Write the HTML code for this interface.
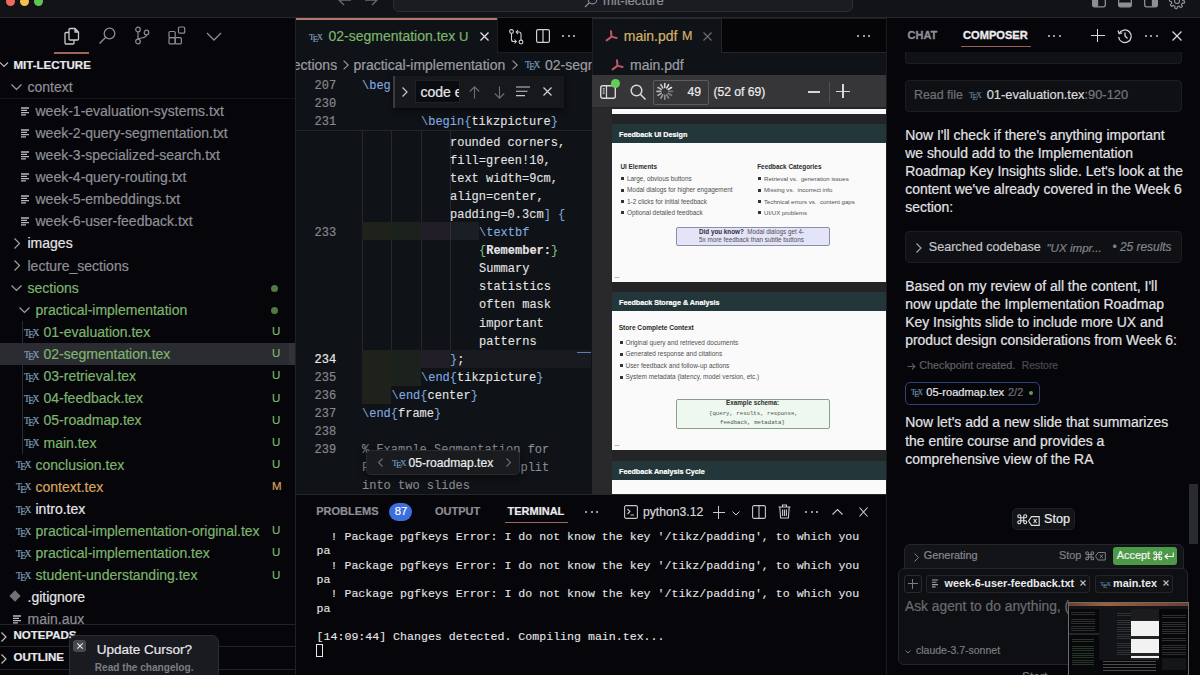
<!DOCTYPE html>
<html><head><meta charset="utf-8">
<style>
*{box-sizing:border-box;margin:0;padding:0}
html,body{width:1200px;height:675px;overflow:hidden;background:#07070a;font-family:"Liberation Sans",sans-serif;color:#ccc}
.a{position:absolute}
.t{position:absolute;white-space:pre;line-height:1;-webkit-text-stroke:0.2px currentColor}
.m{-webkit-text-stroke:0.1px currentColor}
svg{overflow:visible}
</style></head>
<body>
<div class="a" style="left:0px;top:0px;width:1200px;height:17px;background:#121317;"></div>
<div class="a" style="left:0px;top:17px;width:1200px;height:1px;background:#26272c;"></div>
<div class="a" style="left:5.800000000000001px;top:-3.45px;width:9.2px;height:9.2px;border-radius:5px;background:#ee6a5f"></div>
<div class="a" style="left:19.799999999999997px;top:-3.45px;width:9.2px;height:9.2px;border-radius:5px;background:#f5be4f"></div>
<div class="a" style="left:33.9px;top:-3.45px;width:9.2px;height:9.2px;border-radius:5px;background:#5fc454"></div>
<svg class="a" style="left:338px;top:-6px;" width="14" height="14" viewBox="0 0 14 14"><path d="M6 1 L1 6 L6 11 M1 6 H13" stroke="#6b6c70" stroke-width="1.3" fill="none"/></svg>
<svg class="a" style="left:364px;top:-6px;" width="14" height="14" viewBox="0 0 14 14"><path d="M8 1 L13 6 L8 11 M13 6 H1" stroke="#6b6c70" stroke-width="1.3" fill="none"/></svg>
<div class="a" style="left:393px;top:-7px;width:460px;height:19px;border:1px solid #2c2d32;border-radius:6px;background:#1b1c21"></div>
<svg class="a" style="left:584px;top:-5px;" width="14" height="14" viewBox="0 0 14 14"><circle cx="8.5" cy="4.5" r="4.3" stroke="#8a8b90" stroke-width="1.2" fill="none"/><path d="M5.5 7.5 L1 12" stroke="#8a8b90" stroke-width="1.3"/></svg>
<div class="t" style="left:603.00px;top:-6.20px;font-size:13px;color:#8f9095;font-family:'Liberation Sans',sans-serif;">mit-lecture</div>
<svg class="a" style="left:1091.5px;top:-7px;" width="14" height="14.5" viewBox="0 0 14 14.5"><rect x="0.65" y="0.65" width="12.7" height="13.2" rx="2" stroke="#8e8f94" stroke-width="1.3" fill="none"/><rect x="0.65" y="0.65" width="5.5" height="13.2" rx="1.5" fill="#8e8f94"/></svg>
<svg class="a" style="left:1117.5px;top:-7px;" width="14" height="14.5" viewBox="0 0 14 14.5"><rect x="0.65" y="0.65" width="12.7" height="13.2" rx="2" stroke="#8e8f94" stroke-width="1.3" fill="none"/><rect x="0.65" y="9.5" width="12.7" height="4.35" rx="1.5" fill="#8e8f94"/></svg>
<svg class="a" style="left:1144px;top:-7px;" width="14" height="14.5" viewBox="0 0 14 14.5"><rect x="0.65" y="0.65" width="12.7" height="13.2" rx="2" stroke="#8e8f94" stroke-width="1.3" fill="none"/><rect x="7.85" y="0.65" width="5.5" height="13.2" rx="1.5" fill="#8e8f94"/></svg>
<svg class="a" style="left:1169px;top:-7.5px;" width="16" height="16" viewBox="0 0 16 16"><polygon points="15.60,8.00 15.56,8.74 15.45,9.48 15.27,10.21 13.17,10.14 12.94,10.64 12.66,11.11 12.33,11.55 13.37,13.37 12.82,13.87 12.22,14.32 11.58,14.70 10.14,13.17 9.63,13.36 9.09,13.49 8.55,13.57 8.00,15.60 7.26,15.56 6.52,15.45 5.79,15.27 5.86,13.17 5.36,12.94 4.89,12.66 4.45,12.33 2.63,13.37 2.13,12.82 1.68,12.22 1.30,11.58 2.83,10.14 2.64,9.63 2.51,9.09 2.43,8.55 0.40,8.00 0.44,7.26 0.55,6.52 0.73,5.79 2.83,5.86 3.06,5.36 3.34,4.89 3.67,4.45 2.63,2.63 3.18,2.13 3.78,1.68 4.42,1.30 5.86,2.83 6.37,2.64 6.91,2.51 7.45,2.43 8.00,0.40 8.74,0.44 9.48,0.55 10.21,0.73 10.14,2.83 10.64,3.06 11.11,3.34 11.55,3.67 13.37,2.63 13.87,3.18 14.32,3.78 14.70,4.42 13.17,5.86 13.36,6.37 13.49,6.91 13.57,7.45" stroke="#8e8f94" stroke-width="1.2" fill="none" stroke-linejoin="round"/><circle cx="8" cy="8" r="2.5" stroke="#8e8f94" stroke-width="1.2" fill="none"/></svg>
<div class="a" style="left:0px;top:18px;width:295px;height:657px;background:#05050a;"></div>
<svg class="a" style="left:63px;top:27px;" width="17" height="18" viewBox="0 0 17 18"><path d="M7 1.5 H12 L15.5 5 V12 Q15.5 13 14.5 13 H7 Q6 13 6 12 V2.5 Q6 1.5 7 1.5 Z M12 1.5 V5 H15.5" stroke="#c9c9cc" stroke-width="1.3" fill="none"/><path d="M6 5.5 H3 Q2 5.5 2 6.5 V16 Q2 17 3 17 H10 Q11 17 11 16 V13" stroke="#c9c9cc" stroke-width="1.3" fill="none"/></svg>
<svg class="a" style="left:98px;top:27px;" width="18" height="18" viewBox="0 0 18 18"><circle cx="11.5" cy="6.5" r="5.3" stroke="#8d8e92" stroke-width="1.3" fill="none"/><path d="M7.8 10.2 L1.5 16.5" stroke="#8d8e92" stroke-width="1.4"/></svg>
<svg class="a" style="left:134px;top:26px;" width="16" height="19" viewBox="0 0 16 19"><circle cx="4" cy="3.5" r="2.3" stroke="#8d8e92" stroke-width="1.2" fill="none"/><circle cx="4" cy="15.5" r="2.3" stroke="#8d8e92" stroke-width="1.2" fill="none"/><circle cx="12.5" cy="6.5" r="2.3" stroke="#8d8e92" stroke-width="1.2" fill="none"/><path d="M4 5.8 V13.2 M12.5 8.8 Q12.5 12 4.5 12.5" stroke="#8d8e92" stroke-width="1.2" fill="none"/></svg>
<svg class="a" style="left:168px;top:26px;" width="19" height="19" viewBox="0 0 19 19"><rect x="1" y="5.5" width="6.2" height="6.2" rx="1.2" stroke="#8d8e92" stroke-width="1.2" fill="none"/><rect x="1" y="11.7" width="6.2" height="6.2" rx="1.2" stroke="#8d8e92" stroke-width="1.2" fill="none"/><rect x="7.2" y="11.7" width="6.2" height="6.2" rx="1.2" stroke="#8d8e92" stroke-width="1.2" fill="none"/><rect x="10.5" y="1" width="6.2" height="6.2" rx="1.2" stroke="#8d8e92" stroke-width="1.2" fill="none"/></svg>
<svg class="a" style="left:206px;top:32px;" width="16" height="9" viewBox="0 0 16 9"><path d="M1 1 L8 8 L15 1" stroke="#8d8e92" stroke-width="1.3" fill="none"/></svg>
<div class="a" style="left:54px;top:52.3px;width:35px;height:1.4px;background:#9e665a;"></div>
<svg class="a" style="left:0px;top:62px;" width="8" height="6" viewBox="0 0 8 6"><path d="M0 0.5 L4 4.5 L8 0.5" stroke="#bbb" stroke-width="1.1" fill="none"/></svg>
<div class="t" style="left:13.50px;top:59.77px;font-size:11.5px;color:#e8e8ea;font-family:'Liberation Sans',sans-serif;font-weight:bold;-webkit-text-stroke:0.2px #e8e8ea">MIT-LECTURE</div>
<div class="a" style="left:0px;top:343px;width:296px;height:22px;background:#2b2c32;"></div>
<div class="a" style="left:289px;top:343px;width:7px;height:22px;background:#323338;"></div>
<div class="a" style="left:22px;top:321px;width:1px;height:133px;background:#2a2b30;"></div>
<div class="a" style="left:0px;top:98px;width:295px;height:1px;background:#141519;"></div>
<svg class="a" style="left:11px;top:83.56px;" width="11" height="7" viewBox="0 0 11 7"><path d="M0.5 0.5 L5.5 5.5 L10.5 0.5" stroke="#a0a1a5" stroke-width="1.2" fill="none"/></svg>
<div class="t" style="left:27.50px;top:79.71px;font-size:14px;color:#8f9095;font-family:'Liberation Sans',sans-serif;">context</div>
<svg class="a" style="left:21px;top:106.56px;" width="9" height="9" viewBox="0 0 9 9"><path d="M0 1 H8 M0 3.3 H6 M0 5.6 H8 M0 7.9 H5" stroke="#b9babd" stroke-width="1.3"/></svg>
<div class="t" style="left:35.50px;top:103.71px;font-size:14px;color:#8f9095;font-family:'Liberation Sans',sans-serif;">week-1-evaluation-systems.txt</div>
<svg class="a" style="left:21px;top:128.68px;" width="9" height="9" viewBox="0 0 9 9"><path d="M0 1 H8 M0 3.3 H6 M0 5.6 H8 M0 7.9 H5" stroke="#b9babd" stroke-width="1.3"/></svg>
<div class="t" style="left:35.50px;top:125.83px;font-size:14px;color:#8f9095;font-family:'Liberation Sans',sans-serif;">week-2-query-segmentation.txt</div>
<svg class="a" style="left:21px;top:150.8px;" width="9" height="9" viewBox="0 0 9 9"><path d="M0 1 H8 M0 3.3 H6 M0 5.6 H8 M0 7.9 H5" stroke="#b9babd" stroke-width="1.3"/></svg>
<div class="t" style="left:35.50px;top:147.95px;font-size:14px;color:#8f9095;font-family:'Liberation Sans',sans-serif;">week-3-specialized-search.txt</div>
<svg class="a" style="left:21px;top:172.92000000000002px;" width="9" height="9" viewBox="0 0 9 9"><path d="M0 1 H8 M0 3.3 H6 M0 5.6 H8 M0 7.9 H5" stroke="#b9babd" stroke-width="1.3"/></svg>
<div class="t" style="left:35.50px;top:170.07px;font-size:14px;color:#8f9095;font-family:'Liberation Sans',sans-serif;">week-4-query-routing.txt</div>
<svg class="a" style="left:21px;top:195.04000000000002px;" width="9" height="9" viewBox="0 0 9 9"><path d="M0 1 H8 M0 3.3 H6 M0 5.6 H8 M0 7.9 H5" stroke="#b9babd" stroke-width="1.3"/></svg>
<div class="t" style="left:35.50px;top:192.19px;font-size:14px;color:#8f9095;font-family:'Liberation Sans',sans-serif;">week-5-embeddings.txt</div>
<svg class="a" style="left:21px;top:217.16000000000003px;" width="9" height="9" viewBox="0 0 9 9"><path d="M0 1 H8 M0 3.3 H6 M0 5.6 H8 M0 7.9 H5" stroke="#b9babd" stroke-width="1.3"/></svg>
<div class="t" style="left:35.50px;top:214.31px;font-size:14px;color:#8f9095;font-family:'Liberation Sans',sans-serif;">week-6-user-feedback.txt</div>
<svg class="a" style="left:14px;top:238.28px;" width="7" height="11" viewBox="0 0 7 11"><path d="M0.5 0.5 L5.5 5.5 L0.5 10.5" stroke="#a0a1a5" stroke-width="1.2" fill="none"/></svg>
<div class="t" style="left:27.50px;top:236.43px;font-size:14px;color:#e4e4e6;font-family:'Liberation Sans',sans-serif;">images</div>
<svg class="a" style="left:14px;top:260.4px;" width="7" height="11" viewBox="0 0 7 11"><path d="M0.5 0.5 L5.5 5.5 L0.5 10.5" stroke="#a0a1a5" stroke-width="1.2" fill="none"/></svg>
<div class="t" style="left:27.50px;top:258.55px;font-size:14px;color:#8f9095;font-family:'Liberation Sans',sans-serif;">lecture_sections</div>
<svg class="a" style="left:11px;top:284.52px;" width="11" height="7" viewBox="0 0 11 7"><path d="M0.5 0.5 L5.5 5.5 L10.5 0.5" stroke="#a0a1a5" stroke-width="1.2" fill="none"/></svg>
<div class="t" style="left:27.50px;top:280.67px;font-size:14px;color:#7db46c;font-family:'Liberation Sans',sans-serif;">sections</div>
<div class="a" style="left:271px;top:285.0px;width:7px;height:7px;border-radius:4px;background:#4f7a44"></div>
<svg class="a" style="left:19px;top:306.64px;" width="11" height="7" viewBox="0 0 11 7"><path d="M0.5 0.5 L5.5 5.5 L10.5 0.5" stroke="#a0a1a5" stroke-width="1.2" fill="none"/></svg>
<div class="t" style="left:35.50px;top:302.79px;font-size:14px;color:#7db46c;font-family:'Liberation Sans',sans-serif;">practical-implementation</div>
<div class="a" style="left:271px;top:307.1px;width:7px;height:7px;border-radius:4px;background:#4f7a44"></div>
<div class="t" style="left:24.0px;top:328.6px;font-family:'Liberation Serif',serif;font-size:9.5px;color:#7d9cb5;letter-spacing:-0.5px">T<span style="position:relative;top:2.2px;margin-left:-1.2px">E</span><span style="margin-left:-1.0px">X</span></div>
<div class="t" style="left:43.50px;top:324.91px;font-size:14px;color:#7db46c;font-family:'Liberation Sans',sans-serif;">01-evaluation.tex</div>
<div class="t" style="left:272.00px;top:326.23px;font-size:11.5px;color:#7db46c;font-family:'Liberation Sans',sans-serif;">U</div>
<div class="t" style="left:24.0px;top:350.7px;font-family:'Liberation Serif',serif;font-size:9.5px;color:#7d9cb5;letter-spacing:-0.5px">T<span style="position:relative;top:2.2px;margin-left:-1.2px">E</span><span style="margin-left:-1.0px">X</span></div>
<div class="t" style="left:43.50px;top:347.03px;font-size:14px;color:#7db46c;font-family:'Liberation Sans',sans-serif;">02-segmentation.tex</div>
<div class="t" style="left:272.00px;top:348.35px;font-size:11.5px;color:#7db46c;font-family:'Liberation Sans',sans-serif;">U</div>
<div class="t" style="left:24.0px;top:372.8px;font-family:'Liberation Serif',serif;font-size:9.5px;color:#7d9cb5;letter-spacing:-0.5px">T<span style="position:relative;top:2.2px;margin-left:-1.2px">E</span><span style="margin-left:-1.0px">X</span></div>
<div class="t" style="left:43.50px;top:369.15px;font-size:14px;color:#7db46c;font-family:'Liberation Sans',sans-serif;">03-retrieval.tex</div>
<div class="t" style="left:272.00px;top:370.47px;font-size:11.5px;color:#7db46c;font-family:'Liberation Sans',sans-serif;">U</div>
<div class="t" style="left:24.0px;top:394.9px;font-family:'Liberation Serif',serif;font-size:9.5px;color:#7d9cb5;letter-spacing:-0.5px">T<span style="position:relative;top:2.2px;margin-left:-1.2px">E</span><span style="margin-left:-1.0px">X</span></div>
<div class="t" style="left:43.50px;top:391.27px;font-size:14px;color:#7db46c;font-family:'Liberation Sans',sans-serif;">04-feedback.tex</div>
<div class="t" style="left:272.00px;top:392.59px;font-size:11.5px;color:#7db46c;font-family:'Liberation Sans',sans-serif;">U</div>
<div class="t" style="left:24.0px;top:417.0px;font-family:'Liberation Serif',serif;font-size:9.5px;color:#7d9cb5;letter-spacing:-0.5px">T<span style="position:relative;top:2.2px;margin-left:-1.2px">E</span><span style="margin-left:-1.0px">X</span></div>
<div class="t" style="left:43.50px;top:413.39px;font-size:14px;color:#7db46c;font-family:'Liberation Sans',sans-serif;">05-roadmap.tex</div>
<div class="t" style="left:272.00px;top:414.71px;font-size:11.5px;color:#7db46c;font-family:'Liberation Sans',sans-serif;">U</div>
<div class="t" style="left:24.0px;top:439.2px;font-family:'Liberation Serif',serif;font-size:9.5px;color:#7d9cb5;letter-spacing:-0.5px">T<span style="position:relative;top:2.2px;margin-left:-1.2px">E</span><span style="margin-left:-1.0px">X</span></div>
<div class="t" style="left:43.50px;top:435.51px;font-size:14px;color:#7db46c;font-family:'Liberation Sans',sans-serif;">main.tex</div>
<div class="t" style="left:272.00px;top:436.83px;font-size:11.5px;color:#7db46c;font-family:'Liberation Sans',sans-serif;">U</div>
<div class="t" style="left:16.0px;top:461.3px;font-family:'Liberation Serif',serif;font-size:9.5px;color:#7d9cb5;letter-spacing:-0.5px">T<span style="position:relative;top:2.2px;margin-left:-1.2px">E</span><span style="margin-left:-1.0px">X</span></div>
<div class="t" style="left:35.50px;top:457.63px;font-size:14px;color:#7db46c;font-family:'Liberation Sans',sans-serif;">conclusion.tex</div>
<div class="t" style="left:272.00px;top:458.95px;font-size:11.5px;color:#7db46c;font-family:'Liberation Sans',sans-serif;">U</div>
<div class="t" style="left:16.0px;top:483.4px;font-family:'Liberation Serif',serif;font-size:9.5px;color:#7d9cb5;letter-spacing:-0.5px">T<span style="position:relative;top:2.2px;margin-left:-1.2px">E</span><span style="margin-left:-1.0px">X</span></div>
<div class="t" style="left:35.50px;top:479.75px;font-size:14px;color:#d5a45f;font-family:'Liberation Sans',sans-serif;">context.tex</div>
<div class="t" style="left:272.00px;top:481.07px;font-size:11.5px;color:#d5a45f;font-family:'Liberation Sans',sans-serif;">M</div>
<div class="t" style="left:16.0px;top:505.5px;font-family:'Liberation Serif',serif;font-size:9.5px;color:#7d9cb5;letter-spacing:-0.5px">T<span style="position:relative;top:2.2px;margin-left:-1.2px">E</span><span style="margin-left:-1.0px">X</span></div>
<div class="t" style="left:35.50px;top:501.87px;font-size:14px;color:#e4e4e6;font-family:'Liberation Sans',sans-serif;">intro.tex</div>
<div class="t" style="left:16.0px;top:527.6px;font-family:'Liberation Serif',serif;font-size:9.5px;color:#7d9cb5;letter-spacing:-0.5px">T<span style="position:relative;top:2.2px;margin-left:-1.2px">E</span><span style="margin-left:-1.0px">X</span></div>
<div class="t" style="left:35.50px;top:523.99px;font-size:14px;color:#7db46c;font-family:'Liberation Sans',sans-serif;">practical-implementation-original.tex</div>
<div class="t" style="left:272.00px;top:525.31px;font-size:11.5px;color:#7db46c;font-family:'Liberation Sans',sans-serif;">U</div>
<div class="t" style="left:16.0px;top:549.8px;font-family:'Liberation Serif',serif;font-size:9.5px;color:#7d9cb5;letter-spacing:-0.5px">T<span style="position:relative;top:2.2px;margin-left:-1.2px">E</span><span style="margin-left:-1.0px">X</span></div>
<div class="t" style="left:35.50px;top:546.11px;font-size:14px;color:#7db46c;font-family:'Liberation Sans',sans-serif;">practical-implementation.tex</div>
<div class="t" style="left:272.00px;top:547.43px;font-size:11.5px;color:#7db46c;font-family:'Liberation Sans',sans-serif;">U</div>
<div class="t" style="left:16.0px;top:571.9px;font-family:'Liberation Serif',serif;font-size:9.5px;color:#7d9cb5;letter-spacing:-0.5px">T<span style="position:relative;top:2.2px;margin-left:-1.2px">E</span><span style="margin-left:-1.0px">X</span></div>
<div class="t" style="left:35.50px;top:568.23px;font-size:14px;color:#7db46c;font-family:'Liberation Sans',sans-serif;">student-understanding.tex</div>
<div class="t" style="left:272.00px;top:569.55px;font-size:11.5px;color:#7db46c;font-family:'Liberation Sans',sans-serif;">U</div>
<svg class="a" style="left:9px;top:590px;" width="12" height="12" viewBox="0 0 12 12"><rect x="2" y="2" width="8" height="8" transform="rotate(45 6 6)" fill="#6e7378"/></svg>
<div class="t" style="left:27.50px;top:590.35px;font-size:14px;color:#e4e4e6;font-family:'Liberation Sans',sans-serif;">.gitignore</div>
<svg class="a" style="left:13px;top:615.32px;" width="9" height="9" viewBox="0 0 9 9"><path d="M0 1 H8 M0 3.3 H6 M0 5.6 H8 M0 7.9 H5" stroke="#b9babd" stroke-width="1.3"/></svg>
<div class="t" style="left:27.50px;top:612.47px;font-size:14px;color:#8f9095;font-family:'Liberation Sans',sans-serif;">main.aux</div>
<div class="a" style="left:0px;top:624px;width:295px;height:51px;background:#05050a;"></div>
<div class="a" style="left:0px;top:624px;width:295px;height:1px;background:#222328;"></div>
<div class="a" style="left:0px;top:646px;width:295px;height:1px;background:#222328;"></div>
<div class="a" style="left:0px;top:669px;width:295px;height:1px;background:#222328;"></div>
<svg class="a" style="left:1px;top:632px;" width="6" height="10" viewBox="0 0 6 10"><path d="M0.5 0.5 L5 5 L0.5 9.5" stroke="#c0c0c3" stroke-width="1.2" fill="none"/></svg>
<div class="t" style="left:13.50px;top:630.27px;font-size:11.5px;color:#e8e8ea;font-family:'Liberation Sans',sans-serif;font-weight:bold;-webkit-text-stroke:0.2px #e8e8ea">NOTEPADS</div>
<svg class="a" style="left:1px;top:654px;" width="6" height="10" viewBox="0 0 6 10"><path d="M0.5 0.5 L5 5 L0.5 9.5" stroke="#c0c0c3" stroke-width="1.2" fill="none"/></svg>
<div class="t" style="left:13.50px;top:652.27px;font-size:11.5px;color:#e8e8ea;font-family:'Liberation Sans',sans-serif;font-weight:bold;-webkit-text-stroke:0.2px #e8e8ea">OUTLINE</div>
<div class="a" style="left:295px;top:18px;width:297px;height:476px;background:#0f1216;"></div>
<div class="a" style="left:295px;top:18px;width:1px;height:657px;background:#1f2126;"></div>
<div class="a" style="left:295px;top:18px;width:202px;height:2px;background:#b8776a;"></div>
<div class="a" style="left:497px;top:18px;width:95px;height:35px;background:#050507;border-left:1px solid #1d1e22;border-bottom:1px solid #1d1e22"></div>
<div class="t" style="left:309.0px;top:33.0px;font-family:'Liberation Serif',serif;font-size:8.7px;color:#7d9cb5;letter-spacing:-0.5px">T<span style="position:relative;top:2.0px;margin-left:-1.1px">E</span><span style="margin-left:-0.9px">X</span></div>
<div class="t" style="left:328.50px;top:28.75px;font-size:14px;color:#7db46c;font-family:'Liberation Sans',sans-serif;">02-segmentation.tex</div>
<div class="t" style="left:459.00px;top:29.60px;font-size:13px;color:#7db46c;font-family:'Liberation Sans',sans-serif;">U</div>
<svg class="a" style="left:480px;top:32px;" width="9" height="9" viewBox="0 0 9 9"><path d="M0.5 0.5 L8.5 8.5 M8.5 0.5 L0.5 8.5" stroke="#e0e0e2" stroke-width="1.3"/></svg>
<svg class="a" style="left:509px;top:29px;" width="15" height="16" viewBox="0 0 15 16"><circle cx="2.5" cy="2.5" r="1.9" stroke="#d0d0d3" stroke-width="1.1" fill="none"/><circle cx="12" cy="13" r="1.9" stroke="#d0d0d3" stroke-width="1.1" fill="none"/><path d="M2.5 4.4 V10.5 Q2.5 12.5 4.5 12.5 H7 M5.5 10.5 L7.3 12.5 L5.5 14.5 M12 11.1 V5 Q12 3 10 3 H7.5 M9 1 L7.2 3 L9 5" stroke="#d0d0d3" stroke-width="1.1" fill="none"/></svg>
<svg class="a" style="left:536px;top:29px;" width="14" height="14" viewBox="0 0 14 14"><rect x="0.6" y="0.6" width="12.8" height="12.8" rx="1.5" stroke="#d0d0d3" stroke-width="1.2" fill="none"/><path d="M7 0.6 V13.4" stroke="#d0d0d3" stroke-width="1.2"/></svg>
<div class="a" style="left:562px;top:35px;width:2.2px;height:2.2px;border-radius:1px;background:#d0d0d3"></div>
<div class="a" style="left:567.5px;top:35px;width:2.2px;height:2.2px;border-radius:1px;background:#d0d0d3"></div>
<div class="a" style="left:573px;top:35px;width:2.2px;height:2.2px;border-radius:1px;background:#d0d0d3"></div>
<div class="t" style="left:292.80px;top:57.85px;font-size:14px;color:#9c9da2;font-family:'Liberation Sans',sans-serif;clip-path:inset(0 0 0 2.2px)">ections</div>
<svg class="a" style="left:343px;top:60px;" width="6" height="10" viewBox="0 0 6 10"><path d="M0.6 0.6 L5.2 5 L0.6 9.4" stroke="#9c9da2" stroke-width="1.1" fill="none"/></svg>
<div class="t" style="left:353.50px;top:57.85px;font-size:14px;color:#9c9da2;font-family:'Liberation Sans',sans-serif;">practical-implementation</div>
<svg class="a" style="left:512px;top:60px;" width="6" height="10" viewBox="0 0 6 10"><path d="M0.6 0.6 L5.2 5 L0.6 9.4" stroke="#9c9da2" stroke-width="1.1" fill="none"/></svg>
<div class="t" style="left:525.0px;top:61.3px;font-family:'Liberation Serif',serif;font-size:9.5px;color:#6f97b8;letter-spacing:-0.5px">T<span style="position:relative;top:2.2px;margin-left:-1.2px">E</span><span style="margin-left:-1.0px">X</span></div>
<div class="t" style="left:545.00px;top:57.85px;font-size:14px;color:#9c9da2;font-family:'Liberation Sans',sans-serif;width:47px;overflow:hidden">02-segmentation.tex</div>
<div class="a" style="left:362px;top:131px;width:1px;height:219px;background:#25272c;"></div>
<div class="a" style="left:391px;top:131px;width:1px;height:219px;background:#25272c;"></div>
<div class="a" style="left:421px;top:131px;width:1px;height:219px;background:#25272c;"></div>
<div class="a" style="left:450px;top:131px;width:1px;height:219px;background:#25272c;"></div>
<div class="a" style="left:362.0px;top:222px;width:29.3px;height:18px;background:#1f211b"></div>
<div class="a" style="left:391.3px;top:222px;width:29.3px;height:18px;background:#1b221e"></div>
<div class="a" style="left:420.6px;top:222px;width:29.3px;height:18px;background:#221e28"></div>
<div class="a" style="left:449.9px;top:222px;width:29.3px;height:18px;background:#1a1f25"></div>
<div class="a" style="left:362px;top:350px;width:229px;height:18px;background:#181a1f;"></div>
<div class="a" style="left:362.0px;top:350px;width:29.3px;height:18px;background:#1f211b"></div>
<div class="a" style="left:391.3px;top:350px;width:29.3px;height:18px;background:#1b221e"></div>
<div class="a" style="left:420.6px;top:350px;width:29.3px;height:18px;background:#221e28"></div>
<div class="a" style="left:362.0px;top:368px;width:29.3px;height:18px;background:#1f211b"></div>
<div class="a" style="left:391.3px;top:368px;width:29.3px;height:18px;background:#1b221e"></div>
<div class="a" style="left:362.0px;top:386px;width:29.3px;height:18px;background:#1f211b"></div>
<div class="a" style="left:577px;top:351.5px;width:14px;height:1.4px;background:#5a7cb8;"></div>
<div class="a" style="left:450px;top:222px;width:1px;height:18px;background:#2e3036;"></div>
<div class="t m" style="left:450px;top:136.55px;font-size:12px;font-family:'Liberation Mono',monospace;color:#e4e4e4">rounded corners,</div>
<div class="t m" style="left:450px;top:154.65px;font-size:12px;font-family:'Liberation Mono',monospace;color:#e4e4e4">fill=green!10,</div>
<div class="t m" style="left:450px;top:172.75px;font-size:12px;font-family:'Liberation Mono',monospace;color:#e4e4e4">text width=9cm,</div>
<div class="t m" style="left:450px;top:190.85px;font-size:12px;font-family:'Liberation Mono',monospace;color:#e4e4e4">align=center,</div>
<div class="t m" style="left:450px;top:208.95px;font-size:12px;font-family:'Liberation Mono',monospace;color:#e4e4e4">padding=0.3cm<span style="color:#7aa6dc">]</span> <span style="color:#7aa6dc">{</span></div>
<div class="t" style="left:314.50px;top:227.05px;font-size:12px;color:#85878b;font-family:'Liberation Mono',monospace;">233</div>
<div class="t m" style="left:479px;top:227.05px;font-size:12px;font-family:'Liberation Mono',monospace;color:#e4e4e4"><span style="color:#7f9cc0">\</span><span style="color:#82ace0">textbf</span></div>
<div class="t m" style="left:479px;top:245.15px;font-size:12px;font-family:'Liberation Mono',monospace;color:#e4e4e4"><span style="color:#7fbf78">{</span><b>Remember:</b><span style="color:#7fbf78">}</span></div>
<div class="t m" style="left:479px;top:263.25px;font-size:12px;font-family:'Liberation Mono',monospace;color:#e4e4e4">Summary</div>
<div class="t m" style="left:479px;top:281.35px;font-size:12px;font-family:'Liberation Mono',monospace;color:#e4e4e4">statistics</div>
<div class="t m" style="left:479px;top:299.45px;font-size:12px;font-family:'Liberation Mono',monospace;color:#e4e4e4">often mask</div>
<div class="t m" style="left:479px;top:317.55px;font-size:12px;font-family:'Liberation Mono',monospace;color:#e4e4e4">important</div>
<div class="t m" style="left:479px;top:335.65px;font-size:12px;font-family:'Liberation Mono',monospace;color:#e4e4e4">patterns</div>
<div class="t" style="left:314.50px;top:353.75px;font-size:12px;color:#e8e8ea;font-family:'Liberation Mono',monospace;">234</div>
<div class="t m" style="left:450px;top:353.75px;font-size:12px;font-family:'Liberation Mono',monospace;color:#e4e4e4"><span style="color:#7aa6dc">}</span>;</div>
<div class="t" style="left:314.50px;top:371.85px;font-size:12px;color:#85878b;font-family:'Liberation Mono',monospace;">235</div>
<div class="t m" style="left:421px;top:371.85px;font-size:12px;font-family:'Liberation Mono',monospace;color:#e4e4e4"><span style="color:#7f9cc0">\</span><span style="color:#82ace0">end</span><span style="color:#7aa6dc">{</span>tikzpicture<span style="color:#7aa6dc">}</span></div>
<div class="t" style="left:314.50px;top:389.95px;font-size:12px;color:#85878b;font-family:'Liberation Mono',monospace;">236</div>
<div class="t m" style="left:391.5px;top:389.95px;font-size:12px;font-family:'Liberation Mono',monospace;color:#e4e4e4"><span style="color:#7f9cc0">\</span><span style="color:#82ace0">end</span><span style="color:#7aa6dc">{</span>center<span style="color:#7aa6dc">}</span></div>
<div class="t" style="left:314.50px;top:408.05px;font-size:12px;color:#85878b;font-family:'Liberation Mono',monospace;">237</div>
<div class="t m" style="left:362px;top:408.05px;font-size:12px;font-family:'Liberation Mono',monospace;color:#e4e4e4"><span style="color:#7f9cc0">\</span><span style="color:#82ace0">end</span><span style="color:#7aa6dc">{</span>frame<span style="color:#7aa6dc">}</span></div>
<div class="t" style="left:314.50px;top:426.15px;font-size:12px;color:#85878b;font-family:'Liberation Mono',monospace;">238</div>
<div class="t" style="left:314.50px;top:444.25px;font-size:12px;color:#85878b;font-family:'Liberation Mono',monospace;">239</div>
<div class="t m" style="left:362px;top:444.25px;font-size:12px;font-family:'Liberation Mono',monospace;color:#e4e4e4"><span style="color:#8a8c90">% Example Segmentation for</span></div>
<div class="t m" style="left:362px;top:462.35px;font-size:12px;font-family:'Liberation Mono',monospace;color:#e4e4e4"><span style="color:#8a8c90">F                    split</span></div>
<div class="t m" style="left:362px;top:480.45px;font-size:12px;font-family:'Liberation Mono',monospace;color:#e4e4e4"><span style="color:#8a8c90">into two slides</span></div>
<div class="a" style="left:295px;top:75px;width:297px;height:56px;background:#0f1216;"></div>
<div class="a" style="left:295px;top:130px;width:297px;height:1px;background:#22242a;"></div>
<div class="t" style="left:314.50px;top:80.20px;font-size:12px;color:#85878b;font-family:'Liberation Mono',monospace;">207</div>
<div class="t m" style="left:362px;top:80.20px;font-size:12px;font-family:'Liberation Mono',monospace;color:#e4e4e4"><span style="color:#8aa8d0">\</span><span style="color:#82ace0">beg</span></div>
<div class="t" style="left:314.50px;top:98.30px;font-size:12px;color:#85878b;font-family:'Liberation Mono',monospace;">230</div>
<div class="t" style="left:314.50px;top:116.40px;font-size:12px;color:#85878b;font-family:'Liberation Mono',monospace;">231</div>
<div class="t m" style="left:421px;top:116.40px;font-size:12px;font-family:'Liberation Mono',monospace;color:#e4e4e4"><span style="color:#7f9cc0">\</span><span style="color:#82ace0">begin</span><span style="color:#7aa6dc">{</span>tikzpicture<span style="color:#7aa6dc">}</span></div>
<div class="a" style="left:392.5px;top:76px;width:171px;height:31.5px;background:#17181c;border-left:2px solid #3a3b40;box-shadow:0 2px 6px rgba(0,0,0,.6)"></div>
<svg class="a" style="left:402px;top:87px;" width="6" height="10" viewBox="0 0 6 10"><path d="M0.5 0.5 L5 5 L0.5 9.5" stroke="#c8c8cb" stroke-width="1.2" fill="none"/></svg>
<div class="a" style="left:414.5px;top:80px;width:45px;height:22.5px;background:#0b0c0f;border:1px solid #202126;overflow:hidden"><div class="t" style="left:5px;top:3.9px;font-size:14px;color:#e8e8ea">code e</div></div>
<svg class="a" style="left:469px;top:86px;" width="11" height="13" viewBox="0 0 11 13"><path d="M5.5 12.5 V1 M0.8 5.5 L5.5 0.8 L10.2 5.5" stroke="#6d6e72" stroke-width="1.1" fill="none"/></svg>
<svg class="a" style="left:494px;top:86px;" width="11" height="13" viewBox="0 0 11 13"><path d="M5.5 0.5 V12 M0.8 7.5 L5.5 12.2 L10.2 7.5" stroke="#6d6e72" stroke-width="1.1" fill="none"/></svg>
<svg class="a" style="left:516px;top:86px;" width="15" height="11" viewBox="0 0 15 11"><path d="M0 1 H14 M0 5.3 H11.5 M0 9.6 H9" stroke="#c8c8cb" stroke-width="1.1"/></svg>
<svg class="a" style="left:543px;top:87px;" width="9" height="9" viewBox="0 0 9 9"><path d="M0.5 0.5 L8.5 8.5 M8.5 0.5 L0.5 8.5" stroke="#d0d0d3" stroke-width="1.2"/></svg>
<div class="a" style="left:366px;top:450px;width:154px;height:25px;background:#1a1b1f;border:1px solid #2a2b30;border-radius:5px;box-shadow:0 2px 8px rgba(0,0,0,.5)"></div>
<svg class="a" style="left:378px;top:458px;" width="5" height="9" viewBox="0 0 5 9"><path d="M4.5 0.5 L0.5 4.5 L4.5 8.5" stroke="#6d6e72" stroke-width="1.1" fill="none"/></svg>
<div class="t" style="left:392.0px;top:459.2px;font-family:'Liberation Serif',serif;font-size:9.0px;color:#6f97b8;letter-spacing:-0.5px">T<span style="position:relative;top:2.1px;margin-left:-1.1px">E</span><span style="margin-left:-0.9px">X</span></div>
<div class="t" style="left:408.50px;top:457.26px;font-size:12.1px;color:#ececee;font-family:'Liberation Sans',sans-serif;">05-roadmap.tex</div>
<svg class="a" style="left:506px;top:458px;" width="5" height="9" viewBox="0 0 5 9"><path d="M0.5 0.5 L4.5 4.5 L0.5 8.5" stroke="#6d6e72" stroke-width="1.1" fill="none"/></svg>
<div class="a" style="left:592px;top:18px;width:295px;height:476px;background:#0f1216;"></div>
<div class="a" style="left:592px;top:18px;width:1px;height:476px;background:#1d1e22;"></div>
<div class="a" style="left:592px;top:18px;width:129px;height:1px;background:#2a2b30;"></div>
<div class="a" style="left:721px;top:18px;width:166px;height:35px;background:#050507;border-left:1px solid #25262b;border-bottom:1px solid #25262b;border-top:1px solid #1d1e22"></div>
<svg class="a" style="left:605px;top:30px;" width="13" height="13" viewBox="0 0 13 13"><path d="M6 1.3 Q6.3 4.5 6.5 6.6 Q4 8.5 1.6 10.4 M6.5 6.6 Q9 7.3 11.6 8" stroke="#c4566a" stroke-width="2" fill="none" stroke-linecap="round"/></svg>
<div class="t" style="left:623.75px;top:28.75px;font-size:14px;color:#d4b06a;font-family:'Liberation Sans',sans-serif;">main.pdf</div>
<div class="t" style="left:682.00px;top:30.02px;font-size:12.5px;color:#d4b06a;font-family:'Liberation Sans',sans-serif;">M</div>
<svg class="a" style="left:703px;top:32px;" width="9" height="9" viewBox="0 0 9 9"><path d="M0.5 0.5 L8.5 8.5 M8.5 0.5 L0.5 8.5" stroke="#6d6e72" stroke-width="1.1"/></svg>
<div class="a" style="left:857px;top:35px;width:2.2px;height:2.2px;border-radius:1px;background:#d0d0d3"></div>
<div class="a" style="left:862.5px;top:35px;width:2.2px;height:2.2px;border-radius:1px;background:#d0d0d3"></div>
<div class="a" style="left:868px;top:35px;width:2.2px;height:2.2px;border-radius:1px;background:#d0d0d3"></div>
<svg class="a" style="left:611px;top:59px;" width="13" height="13" viewBox="0 0 13 13"><path d="M6 1.3 Q6.3 4.5 6.5 6.6 Q4 8.5 1.6 10.4 M6.5 6.6 Q9 7.3 11.6 8" stroke="#c4566a" stroke-width="2" fill="none" stroke-linecap="round"/></svg>
<div class="t" style="left:630.00px;top:57.55px;font-size:14px;color:#9c9da2;font-family:'Liberation Sans',sans-serif;">main.pdf</div>
<div class="a" style="left:592px;top:75px;width:295px;height:33px;background:#363538;"></div>
<div class="a" style="left:592px;top:107px;width:295px;height:1px;background:#262528;"></div>
<svg class="a" style="left:600px;top:85px;" width="16" height="14" viewBox="0 0 16 14"><rect x="0.7" y="0.7" width="14.6" height="12.6" rx="2" stroke="#d8d8da" stroke-width="1.4" fill="none"/><path d="M6.5 0.7 V13.3 M2.8 3.8 H4.6 M2.8 6 H4.6 M2.8 8.2 H4.6" stroke="#d8d8da" stroke-width="1.2"/></svg>
<div class="a" style="left:611px;top:79px;width:9px;height:9px;border-radius:5px;background:#62cf58"></div>
<svg class="a" style="left:630px;top:84px;" width="17" height="17" viewBox="0 0 17 17"><circle cx="6.5" cy="6.5" r="5.3" stroke="#d8d8da" stroke-width="1.5" fill="none"/><path d="M10.3 10.3 L15.5 15.5" stroke="#d8d8da" stroke-width="1.6"/></svg>
<div class="a" style="left:653px;top:79.5px;width:56px;height:25px;border:1px solid #5c5c5e;border-radius:2px"></div>
<svg class="a" style="left:655px;top:83px;" width="19" height="19" viewBox="0 0 19 19"><line x1="13.75" y1="8.40" x2="17.55" y2="8.40" stroke="#e8e8ea" stroke-opacity="0.35" stroke-width="1.6" stroke-linecap="round"/><line x1="13.21" y1="10.40" x2="16.50" y2="12.30" stroke="#e8e8ea" stroke-opacity="0.41" stroke-width="1.6" stroke-linecap="round"/><line x1="11.75" y1="11.86" x2="13.65" y2="15.15" stroke="#e8e8ea" stroke-opacity="0.47" stroke-width="1.6" stroke-linecap="round"/><line x1="9.75" y1="12.40" x2="9.75" y2="16.20" stroke="#e8e8ea" stroke-opacity="0.53" stroke-width="1.6" stroke-linecap="round"/><line x1="7.75" y1="11.86" x2="5.85" y2="15.15" stroke="#e8e8ea" stroke-opacity="0.59" stroke-width="1.6" stroke-linecap="round"/><line x1="6.29" y1="10.40" x2="3.00" y2="12.30" stroke="#e8e8ea" stroke-opacity="0.65" stroke-width="1.6" stroke-linecap="round"/><line x1="5.75" y1="8.40" x2="1.95" y2="8.40" stroke="#e8e8ea" stroke-opacity="0.70" stroke-width="1.6" stroke-linecap="round"/><line x1="6.29" y1="6.40" x2="3.00" y2="4.50" stroke="#e8e8ea" stroke-opacity="0.76" stroke-width="1.6" stroke-linecap="round"/><line x1="7.75" y1="4.94" x2="5.85" y2="1.65" stroke="#e8e8ea" stroke-opacity="0.82" stroke-width="1.6" stroke-linecap="round"/><line x1="9.75" y1="4.40" x2="9.75" y2="0.60" stroke="#e8e8ea" stroke-opacity="0.88" stroke-width="1.6" stroke-linecap="round"/><line x1="11.75" y1="4.94" x2="13.65" y2="1.65" stroke="#e8e8ea" stroke-opacity="0.94" stroke-width="1.6" stroke-linecap="round"/><line x1="13.21" y1="6.40" x2="16.50" y2="4.50" stroke="#e8e8ea" stroke-opacity="1.00" stroke-width="1.6" stroke-linecap="round"/></svg>
<div class="t" style="left:687.50px;top:85.67px;font-size:12.2px;color:#eeeeef;font-family:'Liberation Sans',sans-serif;">49</div>
<div class="t" style="left:713.50px;top:85.76px;font-size:12.1px;color:#eeeeef;font-family:'Liberation Sans',sans-serif;">(52 of 69)</div>
<div class="a" style="left:807.5px;top:91px;width:12.5px;height:1.6px;background:#d8d8da;"></div>
<div class="a" style="left:828.5px;top:82px;width:1px;height:21px;background:#505052;"></div>
<div class="a" style="left:836px;top:90.5px;width:14px;height:1.6px;background:#d8d8da;"></div>
<div class="a" style="left:842.2px;top:84px;width:1.6px;height:14px;background:#d8d8da;"></div>
<div class="a" style="left:592px;top:108px;width:295px;height:386px;background:#242326;"></div>
<div class="a" style="left:592px;top:108px;width:20px;height:386px;background:#29282b;"></div>
<div class="a" style="left:612px;top:109px;width:274px;height:5px;background:#fafafa;"></div>
<div class="a" style="left:612px;top:124px;width:274px;height:19px;background:#23373b;"></div>
<div class="t" style="left:619px;top:130.5px;font-size:7.2px;font-weight:bold;color:#ffffff;font-family:'Liberation Sans',sans-serif">Feedback UI Design</div>
<div class="a" style="left:612px;top:143px;width:274px;height:139px;background:#fafafa;"></div>
<div class="t" style="left:615px;top:277px;font-size:2.5px;color:#999">bcd</div>
<div class="t" style="left:620.4px;top:164.26px;font-size:6.4px;font-weight:bold;color:#2b2b2b;font-family:'Liberation Sans',sans-serif;transform:scaleX(1.0);transform-origin:0 0;-webkit-text-stroke:0">UI Elements</div>
<div class="a" style="left:621px;top:177.2px;width:3px;height:3px;background:#333;"></div>
<div class="t" style="left:627px;top:175.76px;font-size:6.4px;color:#505050;font-family:'Liberation Sans',sans-serif;transform:scaleX(1.0);transform-origin:0 0;-webkit-text-stroke:0">Large, obvious buttons</div>
<div class="a" style="left:621px;top:188.6px;width:3px;height:3px;background:#333;"></div>
<div class="t" style="left:627px;top:187.16px;font-size:6.4px;color:#505050;font-family:'Liberation Sans',sans-serif;transform:scaleX(1.0);transform-origin:0 0;-webkit-text-stroke:0">Modal dialogs for higher engagement</div>
<div class="a" style="left:621px;top:200.0px;width:3px;height:3px;background:#333;"></div>
<div class="t" style="left:627px;top:198.56px;font-size:6.4px;color:#505050;font-family:'Liberation Sans',sans-serif;transform:scaleX(1.0);transform-origin:0 0;-webkit-text-stroke:0">1-2 clicks for initial feedback</div>
<div class="a" style="left:621px;top:211.39999999999998px;width:3px;height:3px;background:#333;"></div>
<div class="t" style="left:627px;top:209.96px;font-size:6.4px;color:#505050;font-family:'Liberation Sans',sans-serif;transform:scaleX(1.0);transform-origin:0 0;-webkit-text-stroke:0">Optional detailed feedback</div>
<div class="t" style="left:757.2px;top:164.26px;font-size:6.4px;font-weight:bold;color:#2b2b2b;font-family:'Liberation Sans',sans-serif;transform:scaleX(1.0);transform-origin:0 0;-webkit-text-stroke:0">Feedback Categories</div>
<div class="a" style="left:758px;top:177.2px;width:3px;height:3px;background:#333;"></div>
<div class="t" style="left:764px;top:176.01px;font-size:6.1px;color:#505050;font-family:'Liberation Sans',sans-serif;transform:scaleX(1.0);transform-origin:0 0;-webkit-text-stroke:0">Retrieval vs.  generation issues</div>
<div class="a" style="left:758px;top:188.6px;width:3px;height:3px;background:#333;"></div>
<div class="t" style="left:764px;top:187.41px;font-size:6.1px;color:#505050;font-family:'Liberation Sans',sans-serif;transform:scaleX(1.0);transform-origin:0 0;-webkit-text-stroke:0">Missing vs.  incorrect info</div>
<div class="a" style="left:758px;top:200.0px;width:3px;height:3px;background:#333;"></div>
<div class="t" style="left:764px;top:198.81px;font-size:6.1px;color:#505050;font-family:'Liberation Sans',sans-serif;transform:scaleX(1.0);transform-origin:0 0;-webkit-text-stroke:0">Technical errors vs.  content gaps</div>
<div class="a" style="left:758px;top:211.39999999999998px;width:3px;height:3px;background:#333;"></div>
<div class="t" style="left:764px;top:210.21px;font-size:6.1px;color:#505050;font-family:'Liberation Sans',sans-serif;transform:scaleX(1.0);transform-origin:0 0;-webkit-text-stroke:0">UI/UX problems</div>
<div class="a" style="left:675.5px;top:226.5px;width:154.5px;height:19px;background:#e4e4f8;border:1px solid #8e8ea8;border-radius:2px"></div>
<div class="t" style="left:699px;top:228.65px;font-size:6.3px;color:#505050;font-family:'Liberation Sans',sans-serif;transform:scaleX(1.0);transform-origin:0 0;-webkit-text-stroke:0"><b style="color:#2a2a3a">Did you know?</b>  Modal dialogs get 4-</div>
<div class="t" style="left:699px;top:237.45px;font-size:6.3px;color:#505050;font-family:'Liberation Sans',sans-serif;transform:scaleX(1.0);transform-origin:0 0;-webkit-text-stroke:0">5x more feedback than subtle buttons</div>
<div class="a" style="left:612px;top:292px;width:274px;height:19px;background:#23373b;"></div>
<div class="t" style="left:619px;top:298.5px;font-size:7.2px;font-weight:bold;color:#ffffff;font-family:'Liberation Sans',sans-serif">Feedback Storage &amp; Analysis</div>
<div class="a" style="left:612px;top:311px;width:274px;height:139px;background:#fafafa;"></div>
<div class="t" style="left:615px;top:445px;font-size:2.5px;color:#999">bcd</div>
<div class="t" style="left:618.7px;top:324.89px;font-size:6.6px;font-weight:bold;color:#2b2b2b;font-family:'Liberation Sans',sans-serif;transform:scaleX(1.0);transform-origin:0 0;-webkit-text-stroke:0">Store Complete Context</div>
<div class="a" style="left:619.5px;top:341.2px;width:3px;height:3px;background:#333;"></div>
<div class="t" style="left:625.5px;top:339.72px;font-size:6.45px;color:#505050;font-family:'Liberation Sans',sans-serif;transform:scaleX(1.0);transform-origin:0 0;-webkit-text-stroke:0">Original query and retrieved documents</div>
<div class="a" style="left:619.5px;top:352.7px;width:3px;height:3px;background:#333;"></div>
<div class="t" style="left:625.5px;top:351.22px;font-size:6.45px;color:#505050;font-family:'Liberation Sans',sans-serif;transform:scaleX(1.0);transform-origin:0 0;-webkit-text-stroke:0">Generated response and citations</div>
<div class="a" style="left:619.5px;top:364.2px;width:3px;height:3px;background:#333;"></div>
<div class="t" style="left:625.5px;top:362.72px;font-size:6.45px;color:#505050;font-family:'Liberation Sans',sans-serif;transform:scaleX(1.0);transform-origin:0 0;-webkit-text-stroke:0">User feedback and follow-up actions</div>
<div class="a" style="left:619.5px;top:375.7px;width:3px;height:3px;background:#333;"></div>
<div class="t" style="left:625.5px;top:374.22px;font-size:6.45px;color:#505050;font-family:'Liberation Sans',sans-serif;transform:scaleX(1.0);transform-origin:0 0;-webkit-text-stroke:0">System metadata (latency, model version, etc.)</div>
<div class="a" style="left:675.5px;top:398.5px;width:154px;height:30.5px;background:#eef8ee;border:1px solid #8aa08a;border-radius:2px"></div>
<div class="t" style="left:726px;top:400.44px;font-size:6.3px;font-weight:bold;color:#2b2b2b;font-family:'Liberation Sans',sans-serif;transform:scaleX(1.0);transform-origin:0 0;-webkit-text-stroke:0">Example schema:</div>
<div class="t" style="left:709px;top:410.65px;font-size:5.7px;color:#505050;font-family:'Liberation Mono',monospace;transform:scaleX(1.0);transform-origin:0 0;-webkit-text-stroke:0">{query, results, response,</div>
<div class="t" style="left:720px;top:420.15px;font-size:5.7px;color:#505050;font-family:'Liberation Mono',monospace;transform:scaleX(1.0);transform-origin:0 0;-webkit-text-stroke:0">feedback, metadata}</div>
<div class="a" style="left:612px;top:461px;width:274px;height:19px;background:#23373b;"></div>
<div class="t" style="left:619px;top:467.5px;font-size:7.2px;font-weight:bold;color:#ffffff;font-family:'Liberation Sans',sans-serif">Feedback Analysis Cycle</div>
<div class="a" style="left:612px;top:480px;width:274px;height:139px;background:#fafafa;"></div>
<div class="t" style="left:615px;top:614px;font-size:2.5px;color:#999">bcd</div>
<div class="a" style="left:886px;top:108px;width:1px;height:386px;background:#050507;"></div>
<div class="a" style="left:295px;top:494px;width:592px;height:181px;background:#05050a;"></div>
<div class="a" style="left:295px;top:494px;width:592px;height:1px;background:#25262b;"></div>
<div class="t" style="left:316.25px;top:506.19px;font-size:11px;color:#8e8f94;font-family:'Liberation Sans',sans-serif;font-weight:bold;">PROBLEMS</div>
<div class="a" style="left:389px;top:503px;width:23.3px;height:17.6px;border-radius:9px;background:#3d6ee0"></div>
<div class="t" style="left:394.80px;top:506.33px;font-size:11.3px;color:#ffffff;font-family:'Liberation Sans',sans-serif;">87</div>
<div class="t" style="left:435.00px;top:506.19px;font-size:11px;color:#8e8f94;font-family:'Liberation Sans',sans-serif;font-weight:bold;">OUTPUT</div>
<div class="t" style="left:507.50px;top:506.19px;font-size:11px;color:#ececee;font-family:'Liberation Sans',sans-serif;font-weight:bold;">TERMINAL</div>
<div class="a" style="left:505px;top:522px;width:63px;height:1.3px;background:#a0685e;"></div>
<div class="a" style="left:585px;top:511px;width:2.2px;height:2.2px;border-radius:1px;background:#c8c8cb"></div>
<div class="a" style="left:590.5px;top:511px;width:2.2px;height:2.2px;border-radius:1px;background:#c8c8cb"></div>
<div class="a" style="left:596px;top:511px;width:2.2px;height:2.2px;border-radius:1px;background:#c8c8cb"></div>
<svg class="a" style="left:624px;top:505px;" width="14" height="14" viewBox="0 0 14 14"><rect x="0.6" y="0.6" width="12.8" height="12.8" rx="1.5" stroke="#c8c8cb" stroke-width="1.1" fill="none"/><path d="M3.5 4 L6 6.5 L3.5 9 M6.5 10 H10" stroke="#c8c8cb" stroke-width="1.1" fill="none"/></svg>
<div class="t" style="left:643.00px;top:505.97px;font-size:12.2px;color:#d8d8da;font-family:'Liberation Sans',sans-serif;">python3.12</div>
<div class="a" style="left:712.5px;top:511.6px;width:12.5px;height:1.2px;background:#c8c8cb;"></div>
<div class="a" style="left:718.2px;top:506px;width:1.2px;height:12.5px;background:#c8c8cb;"></div>
<svg class="a" style="left:732px;top:511px;" width="8" height="5" viewBox="0 0 8 5"><path d="M0.5 0.5 L4 4 L7.5 0.5" stroke="#c8c8cb" stroke-width="1" fill="none"/></svg>
<svg class="a" style="left:752px;top:505px;" width="14" height="14" viewBox="0 0 14 14"><rect x="0.6" y="0.6" width="12.8" height="12.8" rx="1.5" stroke="#c8c8cb" stroke-width="1.1" fill="none"/><path d="M7 0.6 V13.4" stroke="#c8c8cb" stroke-width="1.1"/></svg>
<svg class="a" style="left:778px;top:504px;" width="13" height="15" viewBox="0 0 13 15"><path d="M0.5 3 H12.5 M4.5 3 V1 H8.5 V3 M1.8 3 L2.6 14 H10.4 L11.2 3 M4.6 5.5 V12 M6.5 5.5 V12 M8.4 5.5 V12" stroke="#c8c8cb" stroke-width="1.1" fill="none"/></svg>
<div class="a" style="left:805px;top:511px;width:2.2px;height:2.2px;border-radius:1px;background:#c8c8cb"></div>
<div class="a" style="left:810.5px;top:511px;width:2.2px;height:2.2px;border-radius:1px;background:#c8c8cb"></div>
<div class="a" style="left:816px;top:511px;width:2.2px;height:2.2px;border-radius:1px;background:#c8c8cb"></div>
<svg class="a" style="left:832px;top:509px;" width="11" height="6" viewBox="0 0 11 6"><path d="M0.5 5.5 L5.5 0.5 L10.5 5.5" stroke="#c8c8cb" stroke-width="1.1" fill="none"/></svg>
<svg class="a" style="left:859px;top:507px;" width="9" height="10" viewBox="0 0 9 10"><path d="M0.5 0.5 L8.5 9.5 M8.5 0.5 L0.5 9.5" stroke="#c8c8cb" stroke-width="1.1"/></svg>
<div class="t m" style="left:316.6px;top:531.01px;font-size:11.6px;font-family:'Liberation Mono',monospace;color:#e6e6e6">  ! Package pgfkeys Error: I do not know the key &#39;/tikz/padding&#39;, to which you</div>
<div class="t m" style="left:316.6px;top:545.31px;font-size:11.6px;font-family:'Liberation Mono',monospace;color:#e6e6e6">pa</div>
<div class="t m" style="left:316.6px;top:559.61px;font-size:11.6px;font-family:'Liberation Mono',monospace;color:#e6e6e6">  ! Package pgfkeys Error: I do not know the key &#39;/tikz/padding&#39;, to which you</div>
<div class="t m" style="left:316.6px;top:573.91px;font-size:11.6px;font-family:'Liberation Mono',monospace;color:#e6e6e6">pa</div>
<div class="t m" style="left:316.6px;top:588.21px;font-size:11.6px;font-family:'Liberation Mono',monospace;color:#e6e6e6">  ! Package pgfkeys Error: I do not know the key &#39;/tikz/padding&#39;, to which you</div>
<div class="t m" style="left:316.6px;top:602.51px;font-size:11.6px;font-family:'Liberation Mono',monospace;color:#e6e6e6">pa</div>
<div class="t m" style="left:316.6px;top:631.11px;font-size:11.6px;font-family:'Liberation Mono',monospace;color:#e6e6e6">[14:09:44] Changes detected. Compiling main.tex...</div>
<div class="a" style="left:316px;top:644px;width:6.5px;height:13px;border:1.2px solid #e6e6e6"></div>
<div class="a" style="left:295px;top:18px;width:1px;height:657px;background:#1f2126;"></div>
<div class="a" style="left:887px;top:18px;width:313px;height:657px;background:#05050a;"></div>
<div class="a" style="left:886px;top:18px;width:1px;height:657px;background:#1a1b1f;"></div>
<div class="t" style="left:907.50px;top:30.09px;font-size:11px;color:#8e8f94;font-family:'Liberation Sans',sans-serif;font-weight:bold;-webkit-text-stroke:0.3px #8e8f94">CHAT</div>
<div class="t" style="left:963.00px;top:30.00px;font-size:11.1px;color:#ececee;font-family:'Liberation Sans',sans-serif;font-weight:bold;-webkit-text-stroke:0.3px #ececee">COMPOSER</div>
<div class="a" style="left:961px;top:46.4px;width:70px;height:1.1px;background:#96645a;"></div>
<div class="a" style="left:1047.5px;top:34.7px;width:2.2px;height:2.2px;border-radius:1px;background:#c8c8cb"></div>
<div class="a" style="left:1053px;top:34.7px;width:2.2px;height:2.2px;border-radius:1px;background:#c8c8cb"></div>
<div class="a" style="left:1058.5px;top:34.7px;width:2.2px;height:2.2px;border-radius:1px;background:#c8c8cb"></div>
<div class="a" style="left:1091px;top:34.6px;width:13.5px;height:1.3px;background:#d8d8da;"></div>
<div class="a" style="left:1097.1px;top:28.5px;width:1.3px;height:13.5px;background:#d8d8da;"></div>
<svg class="a" style="left:1117px;top:28px;" width="16" height="16" viewBox="0 0 16 16"><path d="M2.2 5.5 A6.3 6.3 0 1 1 1.6 9" stroke="#d8d8da" stroke-width="1.3" fill="none"/><path d="M1 2.5 L2.2 5.8 L5.3 4.8" stroke="#d8d8da" stroke-width="1.2" fill="none"/><path d="M8 4.5 V8 L10.5 10.5" stroke="#d8d8da" stroke-width="1.3" fill="none"/></svg>
<div class="a" style="left:1144.5px;top:34.7px;width:2.2px;height:2.2px;border-radius:1px;background:#c8c8cb"></div>
<div class="a" style="left:1150px;top:34.7px;width:2.2px;height:2.2px;border-radius:1px;background:#c8c8cb"></div>
<div class="a" style="left:1155.5px;top:34.7px;width:2.2px;height:2.2px;border-radius:1px;background:#c8c8cb"></div>
<svg class="a" style="left:1172px;top:31px;" width="10" height="10" viewBox="0 0 10 10"><path d="M0.5 0.5 L9.5 9.5 M9.5 0.5 L0.5 9.5" stroke="#d8d8da" stroke-width="1.3"/></svg>
<div class="a" style="left:905px;top:52px;width:277px;height:12px;background:#101115;border:1px solid #1c1d21;border-top:none;border-radius:0 0 4px 4px"></div>
<div class="a" style="left:905px;top:79.5px;width:277px;height:32px;background:#0f1014;border:1px solid #1c1d21;border-radius:4px"></div>
<div class="t" style="left:914.00px;top:88.90px;font-size:12.4px;color:#707176;font-family:'Liberation Sans',sans-serif;">Read file</div>
<div class="t" style="left:969.0px;top:92.0px;font-family:'Liberation Serif',serif;font-size:8.1px;color:#5f7f98;letter-spacing:-0.5px">T<span style="position:relative;top:1.9px;margin-left:-1.0px">E</span><span style="margin-left:-0.8px">X</span></div>
<div class="t" style="left:986.70px;top:88.52px;font-size:12.85px;color:#dcdcde;font-family:'Liberation Sans',sans-serif;">01-evaluation.tex<span style="color:#77787c">:90-120</span></div>
<div class="t" style="left:905.20px;top:128.79px;font-size:13.95px;color:#e2e2e4;font-family:'Liberation Sans',sans-serif;">Now I&#39;ll check if there&#39;s anything important</div>
<div class="t" style="left:905.20px;top:146.94px;font-size:13.95px;color:#e2e2e4;font-family:'Liberation Sans',sans-serif;">we should add to the Implementation</div>
<div class="t" style="left:905.20px;top:165.09px;font-size:13.95px;color:#e2e2e4;font-family:'Liberation Sans',sans-serif;">Roadmap Key Insights slide. Let&#39;s look at the</div>
<div class="t" style="left:905.20px;top:183.24px;font-size:13.95px;color:#e2e2e4;font-family:'Liberation Sans',sans-serif;">content we&#39;ve already covered in the Week 6</div>
<div class="t" style="left:905.20px;top:201.39px;font-size:13.95px;color:#e2e2e4;font-family:'Liberation Sans',sans-serif;">section:</div>
<div class="a" style="left:905px;top:231px;width:277px;height:31.5px;background:#0f1014;border:1px solid #1c1d21;border-radius:4px"></div>
<svg class="a" style="left:916px;top:243px;" width="6" height="10" viewBox="0 0 6 10"><path d="M0.5 0.5 L5 5 L0.5 9.5" stroke="#a8a9ad" stroke-width="1.1" fill="none"/></svg>
<div class="t" style="left:928.75px;top:240.63px;font-size:12.6px;color:#c6c6c9;font-family:'Liberation Sans',sans-serif;">Searched codebase</div>
<div class="t" style="left:1046.50px;top:241.98px;font-size:11.6px;color:#828388;font-family:'Liberation Sans',sans-serif;font-style:italic;">&quot;UX impr...</div>
<div class="t" style="left:1112.50px;top:242.13px;font-size:11.9px;color:#828388;font-family:'Liberation Sans',sans-serif;font-style:italic;">• 25 results</div>
<div class="t" style="left:905.20px;top:279.69px;font-size:13.95px;color:#e2e2e4;font-family:'Liberation Sans',sans-serif;">Based on my review of all the content, I&#39;ll</div>
<div class="t" style="left:905.20px;top:297.74px;font-size:13.95px;color:#e2e2e4;font-family:'Liberation Sans',sans-serif;">now update the Implementation Roadmap</div>
<div class="t" style="left:905.20px;top:315.79px;font-size:13.95px;color:#e2e2e4;font-family:'Liberation Sans',sans-serif;">Key Insights slide to include more UX and</div>
<div class="t" style="left:905.20px;top:333.84px;font-size:13.95px;color:#e2e2e4;font-family:'Liberation Sans',sans-serif;">product design considerations from Week 6:</div>
<svg class="a" style="left:907px;top:362.5px;" width="9" height="7" viewBox="0 0 9 7"><path d="M0.5 3.5 H7.8 M5 0.7 L7.8 3.5 L5 6.3" stroke="#5d5e62" stroke-width="1.2" fill="none"/></svg>
<div class="t" style="left:919.25px;top:360.36px;font-size:10.8px;color:#606165;font-family:'Liberation Sans',sans-serif;">Checkpoint created.</div>
<div class="t" style="left:1021.75px;top:360.70px;font-size:10.4px;color:#4b4c50;font-family:'Liberation Sans',sans-serif;">Restore</div>
<div class="a" style="left:904.5px;top:381.5px;width:135px;height:23px;border:1.5px solid #34407c;border-radius:5px"></div>
<div class="t" style="left:911.0px;top:389.4px;font-family:'Liberation Serif',serif;font-size:7.6px;color:#6f8aa6;letter-spacing:-0.5px">T<span style="position:relative;top:1.8px;margin-left:-1.0px">E</span><span style="margin-left:-0.8px">X</span></div>
<div class="t" style="left:926.25px;top:386.90px;font-size:11.1px;color:#e6e6e8;font-family:'Liberation Sans',sans-serif;">05-roadmap.tex</div>
<div class="t" style="left:1008.00px;top:386.99px;font-size:11px;color:#6f7074;font-family:'Liberation Sans',sans-serif;">2/2</div>
<div class="a" style="left:1028.5px;top:390.5px;width:4px;height:4px;border-radius:2px;background:#58a050"></div>
<div class="t" style="left:905.20px;top:416.49px;font-size:13.95px;color:#e2e2e4;font-family:'Liberation Sans',sans-serif;">Now let&#39;s add a new slide that summarizes</div>
<div class="t" style="left:905.20px;top:434.59px;font-size:13.95px;color:#e2e2e4;font-family:'Liberation Sans',sans-serif;">the entire course and provides a</div>
<div class="t" style="left:905.20px;top:452.69px;font-size:13.95px;color:#e2e2e4;font-family:'Liberation Sans',sans-serif;">comprehensive view of the RA</div>
<div class="a" style="left:1189px;top:484px;width:9px;height:60px;background:#2a2b2f;"></div>
<div class="a" style="left:1012px;top:507.5px;width:62.5px;height:22.5px;background:#131418;border:1px solid #1f2024;border-radius:5px"></div>
<svg class="a" style="left:1016.5px;top:514px;" width="10.5" height="10.5" viewBox="0 0 10.5 10.5"><g transform="scale(0.875)"><path d="M4.3 4.3 H7.7 V7.7 H4.3 Z M4.3 4.3 V2.6 A1.7 1.7 0 1 0 2.6 4.3 H4.3 M7.7 4.3 V2.6 A1.7 1.7 0 1 1 9.4 4.3 H7.7 M4.3 7.7 V9.4 A1.7 1.7 0 1 1 2.6 7.7 H4.3 M7.7 7.7 V9.4 A1.7 1.7 0 1 0 9.4 7.7 H7.7" stroke="#e0e0e2" stroke-width="1.3" fill="none"/></g></svg>
<svg class="a" style="left:1028px;top:515.5px;" width="12" height="10" viewBox="0 0 12 10"><path d="M3.5 0.6 H11.2 V9.4 H3.5 L0.6 5 Z M5.6 3 L8.6 7 M8.6 3 L5.6 7" stroke="#e0e0e2" stroke-width="1.1" fill="none"/></svg>
<div class="t" style="left:1044.00px;top:513.13px;font-size:12.6px;color:#ececee;font-family:'Liberation Sans',sans-serif;">Stop</div>
<div class="a" style="left:903.75px;top:543.5px;width:280px;height:30px;background:#131418;border:1px solid #25262a;border-radius:6px"></div>
<svg class="a" style="left:914px;top:553px;" width="5" height="9" viewBox="0 0 5 9"><path d="M0.5 0.5 L4.5 4.5 L0.5 8.5" stroke="#7f8084" stroke-width="1" fill="none"/></svg>
<div class="t" style="left:923.75px;top:550.07px;font-size:10.9px;color:#86878b;font-family:'Liberation Sans',sans-serif;">Generating</div>
<div class="t" style="left:1059.00px;top:550.07px;font-size:10.9px;color:#7f8084;font-family:'Liberation Sans',sans-serif;">Stop</div>
<svg class="a" style="left:1084.5px;top:551px;" width="9.5" height="9.5" viewBox="0 0 9.5 9.5"><g transform="scale(0.792)"><path d="M4.3 4.3 H7.7 V7.7 H4.3 Z M4.3 4.3 V2.6 A1.7 1.7 0 1 0 2.6 4.3 H4.3 M7.7 4.3 V2.6 A1.7 1.7 0 1 1 9.4 4.3 H7.7 M4.3 7.7 V9.4 A1.7 1.7 0 1 1 2.6 7.7 H4.3 M7.7 7.7 V9.4 A1.7 1.7 0 1 0 9.4 7.7 H7.7" stroke="#7f8084" stroke-width="1.3" fill="none"/></g></svg>
<svg class="a" style="left:1095px;top:552px;" width="11" height="8.5" viewBox="0 0 11 8.5"><path d="M3 0.5 H10.3 V8 H3 L0.5 4.25 Z M5 2.5 L7.8 6 M7.8 2.5 L5 6" stroke="#7f8084" stroke-width="1" fill="none"/></svg>
<div class="a" style="left:1112.5px;top:547px;width:64.5px;height:18px;background:#4c9a47;border-radius:3px"></div>
<div class="t" style="left:1116.75px;top:550.27px;font-size:10.9px;color:#f4f4f4;font-family:'Liberation Sans',sans-serif;">Accept</div>
<svg class="a" style="left:1153px;top:551px;" width="9.5" height="9.5" viewBox="0 0 9.5 9.5"><g transform="scale(0.792)"><path d="M4.3 4.3 H7.7 V7.7 H4.3 Z M4.3 4.3 V2.6 A1.7 1.7 0 1 0 2.6 4.3 H4.3 M7.7 4.3 V2.6 A1.7 1.7 0 1 1 9.4 4.3 H7.7 M4.3 7.7 V9.4 A1.7 1.7 0 1 1 2.6 7.7 H4.3 M7.7 7.7 V9.4 A1.7 1.7 0 1 0 9.4 7.7 H7.7" stroke="#f4f4f4" stroke-width="1.3" fill="none"/></g></svg>
<svg class="a" style="left:1164px;top:552px;" width="10" height="8" viewBox="0 0 10 8"><path d="M9.3 0.5 V4.5 H1.2 M3.8 2 L1 4.5 L3.8 7" stroke="#f4f4f4" stroke-width="1.1" fill="none"/></svg>
<div class="a" style="left:897.5px;top:568px;width:290px;height:96.8px;background:#0e0f13;border:1px solid #25262b;border-radius:6px"></div>
<div class="a" style="left:903.75px;top:575px;width:18px;height:17.5px;border:1px solid #2a2b30;border-radius:3px"></div>
<div class="a" style="left:907.5px;top:583.2px;width:10.5px;height:1.1px;background:#7a7b7f;"></div>
<div class="a" style="left:912.2px;top:578.5px;width:1.1px;height:10.5px;background:#7a7b7f;"></div>
<div class="a" style="left:926.25px;top:575px;width:163.5px;height:17.5px;border:1px solid #24252a;border-radius:3px;background:#111216"></div>
<svg class="a" style="left:932px;top:579px;" width="7" height="9" viewBox="0 0 7 9"><path d="M0 1 H6 M0 3.3 H4.5 M0 5.6 H6 M0 7.9 H3.5" stroke="#a0a1a5" stroke-width="1.1"/></svg>
<div class="t" style="left:944.50px;top:578.32px;font-size:10.85px;color:#eaeaec;font-family:'Liberation Sans',sans-serif;font-weight:bold;-webkit-text-stroke:0">week-6-user-feedback.txt</div>
<svg class="a" style="left:1079.5px;top:580px;" width="6" height="6" viewBox="0 0 6 6"><path d="M0.5 0.5 L5.5 5.5 M5.5 0.5 L0.5 5.5" stroke="#c0c0c3" stroke-width="1.1"/></svg>
<div class="a" style="left:1094.5px;top:575px;width:78px;height:17.5px;border:1px solid #24252a;border-radius:3px;background:#111216"></div>
<div class="t" style="left:1100.0px;top:580.9px;font-family:'Liberation Serif',serif;font-size:7.1px;color:#5d7d96;letter-spacing:-0.5px">T<span style="position:relative;top:1.7px;margin-left:-0.9px">E</span><span style="margin-left:-0.8px">X</span></div>
<div class="t" style="left:1113.00px;top:578.32px;font-size:10.85px;color:#eaeaec;font-family:'Liberation Sans',sans-serif;font-weight:bold;-webkit-text-stroke:0">main.tex</div>
<svg class="a" style="left:1163px;top:580px;" width="6" height="6" viewBox="0 0 6 6"><path d="M0.5 0.5 L5.5 5.5 M5.5 0.5 L0.5 5.5" stroke="#c0c0c3" stroke-width="1.1"/></svg>
<div class="t" style="left:905.00px;top:600.02px;font-size:13.8px;color:#6a6b6f;font-family:'Liberation Sans',sans-serif;">Ask agent to do anything, (</div>
<svg class="a" style="left:905px;top:650px;" width="6" height="4" viewBox="0 0 6 4"><path d="M0.5 0.5 L3 3 L5.5 0.5" stroke="#77787c" stroke-width="1" fill="none"/></svg>
<div class="t" style="left:916.00px;top:644.81px;font-size:10.5px;color:#7a7b7f;font-family:'Liberation Sans',sans-serif;">claude-3.7-sonnet</div>
<div class="t" style="left:1022.00px;top:670.84px;font-size:12px;color:#777;font-family:'Liberation Sans',sans-serif;">Start</div>
<div class="a" style="left:1068px;top:602px;width:121px;height:80px;background:#0e0f13;overflow:hidden;border:1px solid #6a6b70"><div class="a" style="left:0px;top:0px;width:121px;height:2.5px;background:linear-gradient(90deg,#6a4030,#a0603a 30%,#8a5034 60%,#6a4034)"></div><div class="a" style="left:0px;top:2.5px;width:121px;height:3px;background:#141519"></div><div class="a" style="left:0px;top:5.5px;width:30px;height:70px;background:#08080b"></div><div class="a" style="left:2px;top:9px;width:24px;height:22px;background:repeating-linear-gradient(#2c2d31 0 0.8px,transparent 0.8px 2.3px)"></div><div class="a" style="left:3px;top:36px;width:22px;height:27px;background:repeating-linear-gradient(#26372a 0 0.8px,transparent 0.8px 2.3px)"></div><div class="a" style="left:0px;top:30px;width:30px;height:2px;background:#25262b"></div><div class="a" style="left:30px;top:5.5px;width:32px;height:51px;background:#111317"></div><div class="a" style="left:48px;top:10px;width:14px;height:44px;background:repeating-linear-gradient(#303136 0 0.8px,transparent 0.8px 2.3px)"></div><div class="a" style="left:62px;top:5.5px;width:28px;height:11px;background:#1c1c1f"></div><div class="a" style="left:62px;top:16.5px;width:28px;height:53px;background:#242326"></div><div class="a" style="left:62px;top:17.5px;width:28px;height:15px;background:#f2f2f2"></div><div class="a" style="left:62px;top:35.5px;width:28px;height:14px;background:#f2f2f2"></div><div class="a" style="left:62px;top:52.5px;width:28px;height:2.5px;background:#eeeeee"></div><div class="a" style="left:90px;top:5.5px;width:31px;height:70px;background:#07070a"></div><div class="a" style="left:93px;top:12px;width:24px;height:40px;background:repeating-linear-gradient(#2e2f33 0 0.8px,transparent 0.8px 2.3px)"></div><div class="a" style="left:93px;top:55px;width:24px;height:12px;background:#15161a"></div><div class="a" style="left:30px;top:56.5px;width:60px;height:20px;background:#07070a"></div><div class="a" style="left:34px;top:58px;width:53px;height:11px;background:repeating-linear-gradient(#4a4b50 0 0.8px,transparent 0.8px 2.9px)"></div></div>
<div class="a" style="left:69px;top:635px;width:150px;height:50px;background:#1a1b20;border:1px solid #2c2d32;border-radius:7px"></div>
<div class="a" style="left:73px;top:639.5px;width:13px;height:12.5px;background:#48494e;border-radius:3px"></div>
<svg class="a" style="left:76.5px;top:642.5px;" width="6" height="6" viewBox="0 0 6 6"><path d="M0.3 0.3 L5.7 5.7 M5.7 0.3 L0.3 5.7" stroke="#e8e8ea" stroke-width="1.1"/></svg>
<div class="t" style="left:96.70px;top:642.77px;font-size:13.5px;color:#e8e8ea;font-family:'Liberation Sans',sans-serif;">Update Cursor?</div>
<div class="t" style="left:94.80px;top:663.15px;font-size:10.1px;color:#7d7e82;font-family:'Liberation Sans',sans-serif;font-weight:bold;-webkit-text-stroke:0">Read the changelog.</div>
</body></html>
